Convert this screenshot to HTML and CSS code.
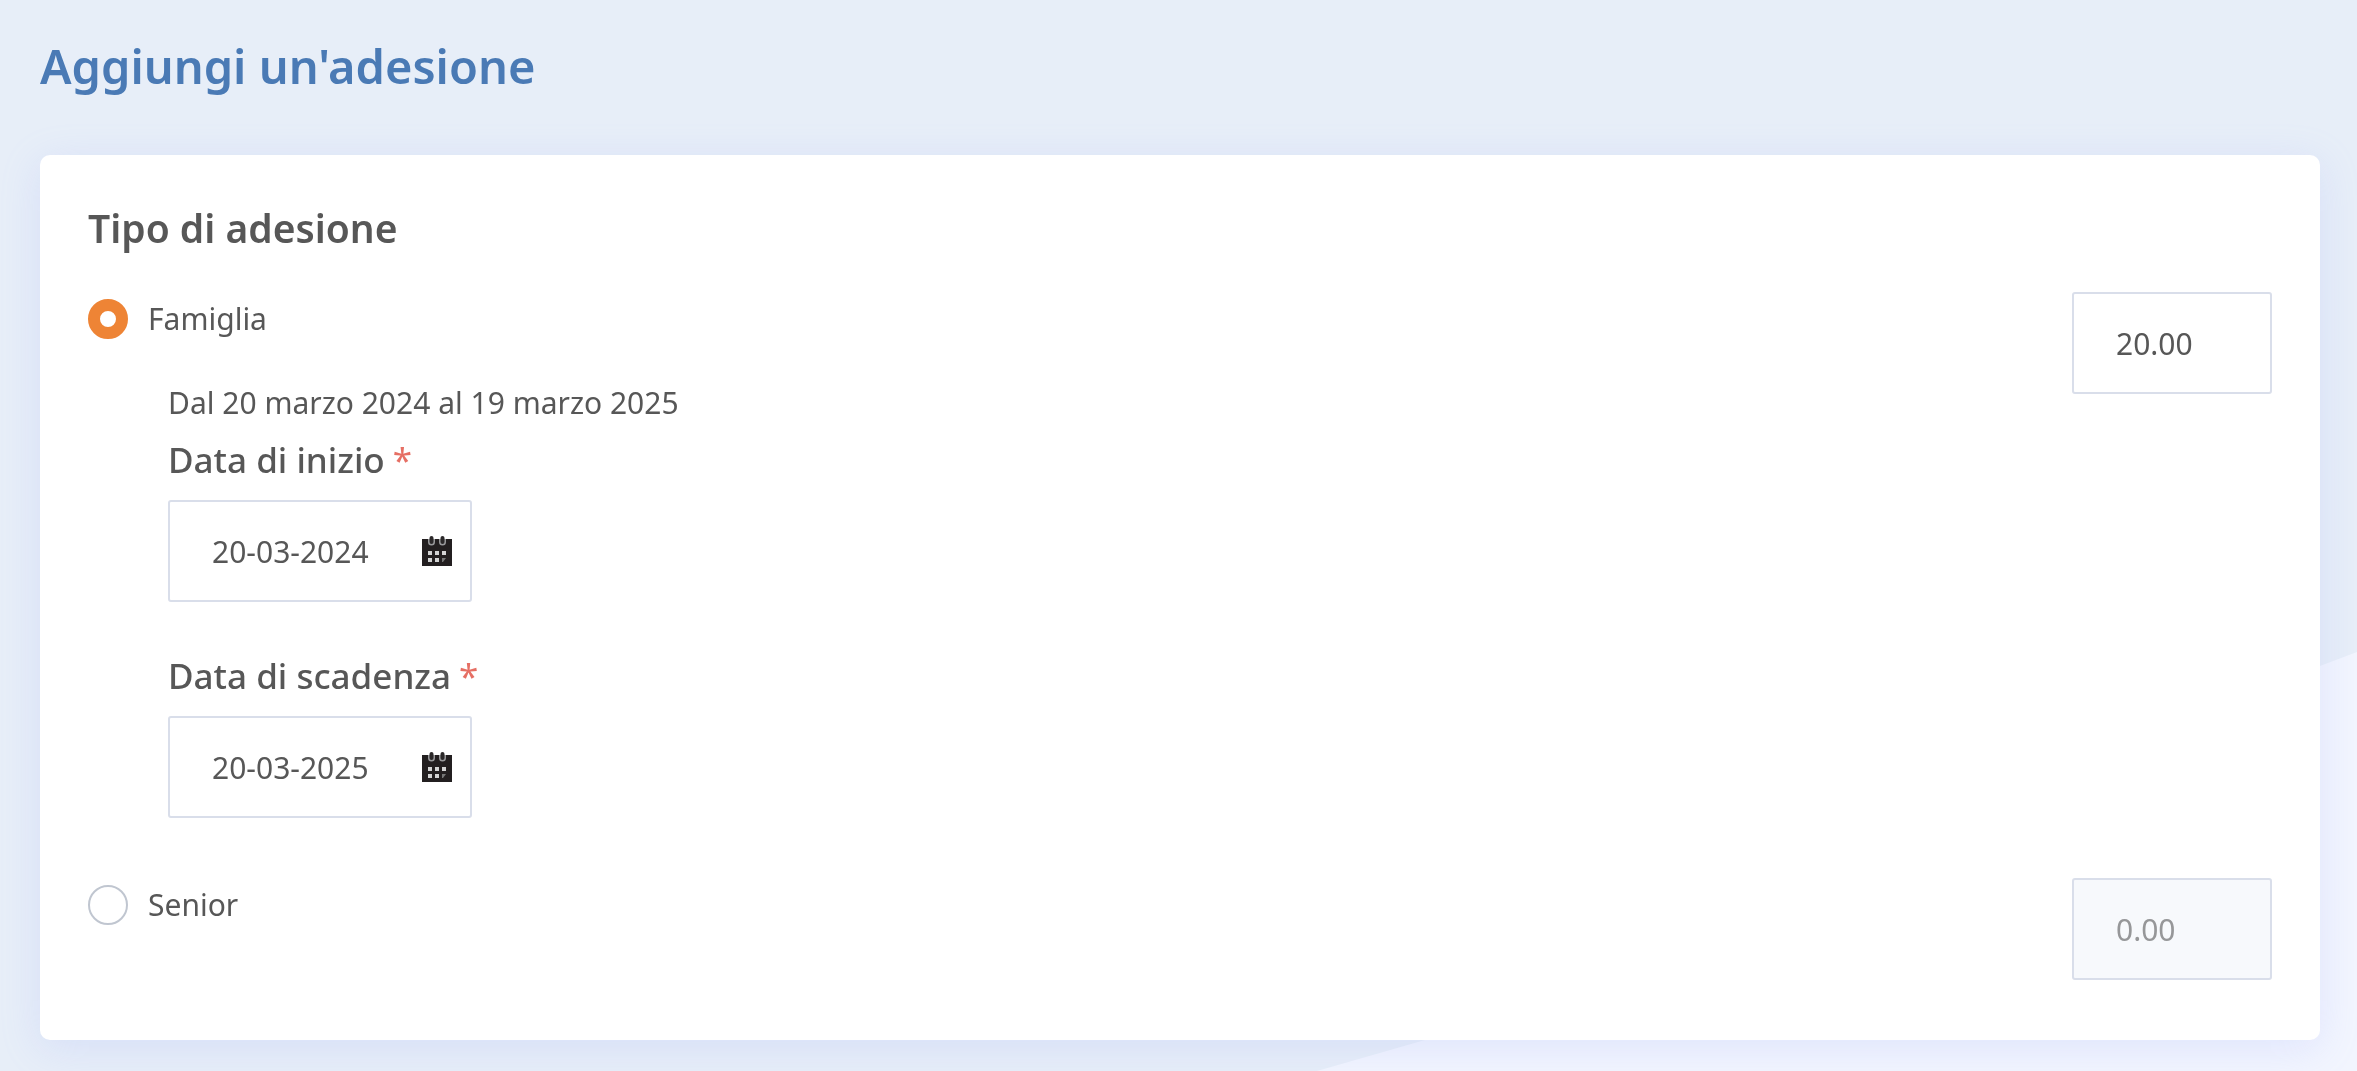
FILE: index.html
```html
<!DOCTYPE html>
<html lang="it">
<head>
  <meta charset="utf-8">
  <meta name="viewport" content="width=device-width, initial-scale=1">
  <title>Aggiungi un'adesione</title>
  <link rel="stylesheet" href="styles.css">
</head>
<body>
  <svg class="backdrop" viewBox="0 0 2357 1071" preserveAspectRatio="none" aria-hidden="true">
    <path d="M1317 1071 L1425 1040 C1760 935 2000 784 2320 666 L2357 652 V1071 Z" fill="#f2f5fe"/>
  </svg>
  <main class="page">
    <h1 class="page-title">Aggiungi un'adesione</h1>
    <form class="card">
      <h2 class="card-title">Tipo di adesione</h2>

      <div class="option">
        <div class="option-main">
          <label class="choice"><input class="radio" type="radio" name="tipo" checked><span>Famiglia</span></label>
          <div class="details">
            <p class="period">Dal 20 marzo 2024 al 19 marzo 2025</p>
            <div class="field">
              <label class="field-label" for="inizio">Data di inizio<span class="required">*</span></label>
              <div class="date-box">
                <input class="date-input" id="inizio" type="text" value="20-03-2024">
                <button class="date-button" type="button" aria-label="Apri calendario">
                  <svg class="icon" viewBox="0 0 30 30" aria-hidden="true"><use href="#calendar"/></svg>
                </button>
              </div>
            </div>
            <div class="field">
              <label class="field-label" for="scadenza">Data di scadenza<span class="required">*</span></label>
              <div class="date-box">
                <input class="date-input" id="scadenza" type="text" value="20-03-2025">
                <button class="date-button" type="button" aria-label="Apri calendario">
                  <svg class="icon" viewBox="0 0 30 30" aria-hidden="true">
                    <g id="calendar">
                      <path d="M0 3H30V30H0Z" fill="#231f20"/>
                      <path d="M6 3h7v3a3.500 3.500 0 0 1-7 0zM17 3h7v3a3.500 3.500 0 0 1-7 0z" fill="#99999b"/>
                      <rect x="7.500" y="0" width="4" height="8" rx="2" fill="#2b2829"/>
                      <rect x="18.500" y="0" width="4" height="8" rx="2" fill="#2b2829"/>
                      <path d="M6 15h4v4H6zM13 15h4v4h-4zM20 15h4v4h-4zM6 22h4v4H6zM13 22h4v4h-4z" fill="#d4d4d4"/>
                      <path d="M20 22h4l-3 4h-1z" fill="#777"/>
                    </g>
                  </svg>
                </button>
              </div>
            </div>
          </div>
        </div>
        <input class="amount" type="text" inputmode="decimal" value="20.00" aria-label="Importo Famiglia">
      </div>

      <div class="option">
        <label class="choice"><input class="radio" type="radio" name="tipo"><span>Senior</span></label>
        <input class="amount" type="text" inputmode="decimal" value="0.00" aria-label="Importo Senior" disabled>
      </div>
    </form>
  </main>
</body>
</html>
```

FILE: styles.css
```css
* {
  box-sizing: border-box;
}

body {
  margin: 0;
  min-height: 100vh;
  background: #e7eef8;
  color: #575757;
  font: 30px/46px "Noto Sans", "Open Sans", sans-serif;
}

h1, h2, p {
  margin: 0;
}

input, button {
  font: inherit;
  color: inherit;
}

.backdrop {
  position: fixed;
  inset: 0;
  z-index: -1;
  width: 100%;
  height: 100%;
}

.page {
  padding: 32px 37px 31px 40px;
}

.page-title {
  margin-bottom: 55px;
  color: #4a7ab5;
  font-size: 47px;
  font-weight: 600;
  line-height: 68px;
}

.card {
  padding: 46px 48px 60px;
  border-radius: 10px;
  background: #fff;
  box-shadow: 0 8px 40px rgba(150, 165, 250, 0.2);
}

.card-title {
  margin-bottom: 37px;
  font-size: 39px;
  font-weight: 600;
  line-height: 54px;
}

.option {
  display: flex;
  justify-content: space-between;
  align-items: flex-start;
}

.option + .option {
  margin-top: 60px;
}

.choice {
  display: flex;
  align-items: center;
  gap: 20px;
  height: 54px;
}

.radio {
  appearance: none;
  width: 40px;
  height: 40px;
  margin: 0;
  border: 2px solid #c0c6d0;
  border-radius: 50%;
  background: #fff;
}

.radio:checked {
  border: 12px solid #ee8435;
}

.details {
  margin: 34px 0 0 80px;
}

.period {
  margin-bottom: 10px;
}

.field + .field {
  margin-top: 50px;
}

.field-label {
  display: block;
  margin-bottom: 16px;
  font-size: 35px;
  font-weight: 500;
  line-height: 48px;
}

.required {
  margin-left: 8px;
  color: #e66f64;
  font-weight: 400;
}

.date-box {
  display: flex;
  align-items: center;
  width: 304px;
  height: 102px;
  padding-right: 18px;
  border: 2px solid #d9deea;
  border-radius: 3px;
}

.date-input {
  flex: 1;
  min-width: 0;
  height: 100%;
  padding: 0 0 0 42px;
  border: 0;
  background: transparent;
}

.date-button {
  width: 30px;
  height: 30px;
  padding: 0;
  border: 0;
  background: none;
}

.icon {
  display: block;
  width: 30px;
  height: 30px;
}

.amount {
  width: 200px;
  height: 102px;
  padding: 0 42px;
  border: 2px solid #d9deea;
  border-radius: 3px;
  background: #fff;
}

.amount:disabled {
  background: #f7f9fc;
  color: #969799;
}
```
